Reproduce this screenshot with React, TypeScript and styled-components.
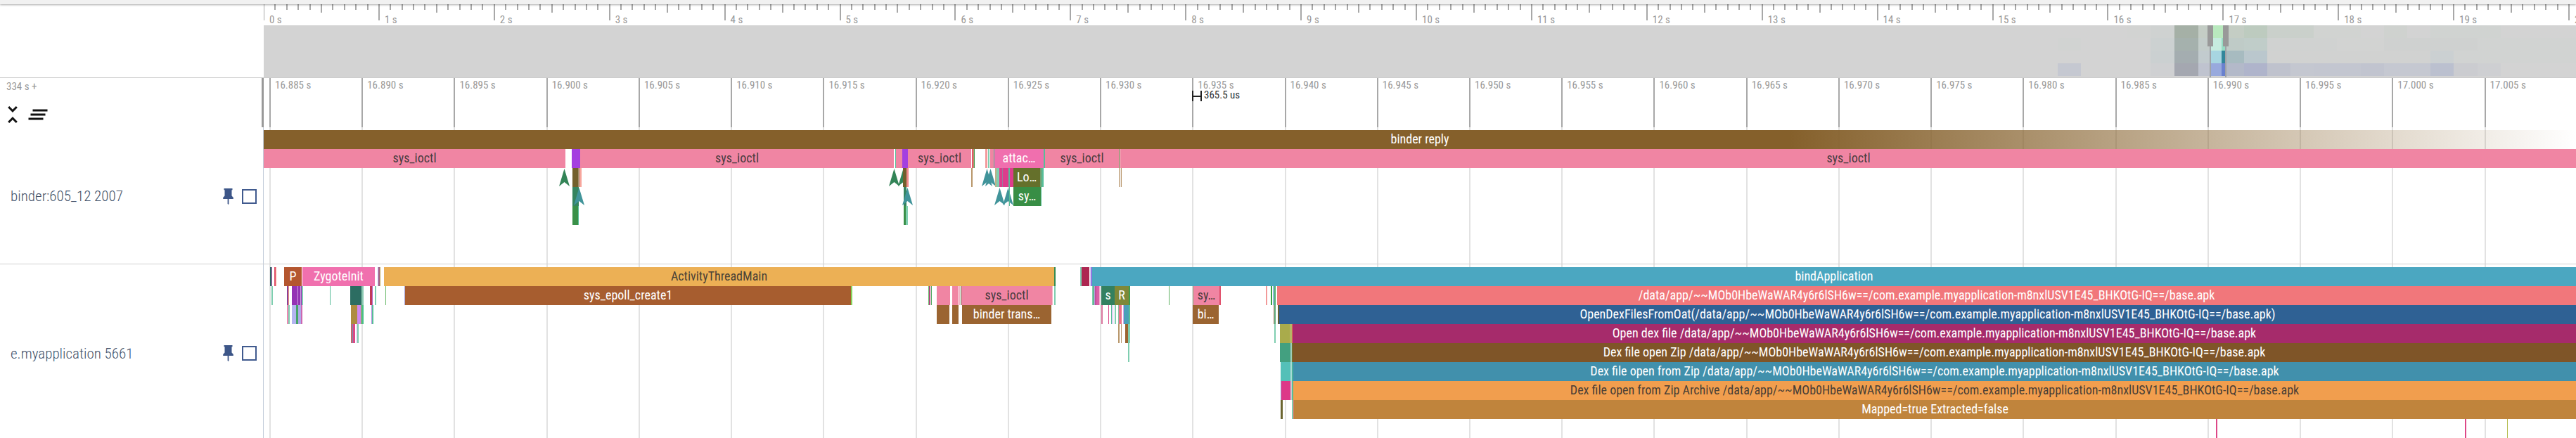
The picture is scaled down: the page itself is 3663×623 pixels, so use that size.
import React from "react";
import styled, { createGlobalStyle } from "styled-components";

/* The visible window, in the units used by all slice data below. */
const VIEW_START = 375;
const VIEW_SPAN = 3288;
const pct = (span: number) => `${(span / VIEW_SPAN) * 100}%`;
const at = (x: number) => pct(x - VIEW_START);

const GlobalStyle = createGlobalStyle`
  * { box-sizing: border-box; }
  body {
    margin: 0;
    background: #fff;
    overflow: hidden;
    font-family: "Roboto Condensed", Roboto, "Liberation Sans", sans-serif;
  }
`;

const Page = styled.div`
  height: 100vh;
  overflow: hidden;
  display: flex;
  flex-direction: column;
`;

const TopBar = styled.div`
  flex: none;
  height: 6px;
  background: #f1f1f1;
  box-shadow: 0 1px 3px rgba(0, 0, 0, 0.35);
  position: relative;
  z-index: 2;
`;

const Columns = styled.div`
  flex: none;
  display: grid;
  grid-template-columns: 375px minmax(0, 1fr);
`;

const OverviewRow = styled(Columns)`
  border-bottom: 1px solid #cccccc;
`;

const OverviewPane = styled.div`
  position: relative;
`;

const SecondsRuler = styled.div`
  position: relative;
  height: 30px;
  overflow: hidden;
`;

const Tick = styled.div<{ $height: number }>`
  position: absolute;
  top: 0;
  width: 2px;
  margin-left: -1px;
  height: ${(p) => p.$height}px;
  background: #a8a8a8;
`;

const TickLabel = styled.span<{ $gap: number; $top: number }>`
  position: absolute;
  top: ${(p) => p.$top}px;
  padding-left: ${(p) => p.$gap}px;
  font-size: 15px;
  line-height: 18px;
  color: #999999;
  white-space: nowrap;
`;

const HeatMap = styled.div`
  position: relative;
  background: #d3d3d3;
  padding-bottom: 2px;
`;

const HeatRow = styled.div`
  position: relative;
  height: 18px;
`;

const HeatCell = styled.div`
  position: absolute;
  top: 0;
  bottom: 0;
`;

const BrushLine = styled.div`
  position: absolute;
  top: 0;
  bottom: 0;
  width: 2px;
  margin-left: -1px;
  background: #a0a3a8;
`;

const BrushHandle = styled.div`
  width: 8px;
  height: 30px;
  margin-left: -3px;
  background: #999999;
`;

const RulerRow = styled(Columns)`
  height: 70px;
`;

const RulerShell = styled.div`
  display: flex;
  flex-direction: column;
  justify-content: space-between;
  border-right: 3px solid #999999;
`;

const Offset = styled.span`
  padding: 3px 9px 0;
  font-size: 15px;
  line-height: 18px;
  color: #999999;
`;

const ToolButtons = styled.div`
  display: flex;
`;

const IconButton = styled.button`
  display: block;
  padding: 0;
  border: 0;
  background: none;
  color: #121212;
  cursor: pointer;
  svg { display: block; fill: currentColor; }
`;

const PinButton = styled(IconButton)`
  color: #3d5688;
`;

const TimeRuler = styled.div`
  position: relative;
  overflow: hidden;
`;

const SpanMarker = styled.div`
  position: absolute;
  top: 15px;
  display: flex;
  align-items: flex-end;
  gap: 3px;
  font-size: 15px;
  line-height: 18px;
  color: #333333;
  white-space: nowrap;
`;

const SpanBracket = styled.div`
  width: 14px;
  height: 15px;
  display: flex;
  align-items: center;
  border: solid #222222;
  border-width: 0 2px;
  &::before {
    content: "";
    flex: 1;
    height: 2px;
    background: #222222;
  }
`;

const Tracks = styled.div`
  position: relative;
  flex: 1;
`;

const GridLayer = styled(Columns)`
  position: absolute;
  inset: 0;
`;

const GridPane = styled.div`
  position: relative;
  grid-column: 2;
`;

const GridLine = styled.div`
  position: absolute;
  top: 0;
  bottom: 0;
  width: 2px;
  margin-left: -1px;
  background: #e2e2e2;
`;

const TrackRow = styled(Columns)`
  position: relative;
  min-height: 195px;
  border-bottom: 1px solid #d0d0d0;
`;

const TrackShell = styled.div`
  display: flex;
  align-items: center;
  gap: 12px;
  padding: 2px 9px 0 15px;
  border-right: 1px solid #c3ccda;
`;

const TrackTitle = styled.label`
  flex: 1;
  font-size: 21px;
  line-height: 24px;
  font-weight: 300;
  color: #42526a;
  white-space: nowrap;
`;

const TrackCheck = styled.input`
  appearance: none;
  flex: none;
  width: 21px;
  height: 21px;
  margin: 0;
  border: 2px solid #405a8e;
  background: #fff;
`;

const TrackContent = styled.div`
  padding: 4px 0;
  overflow: hidden;
`;

const DepthRow = styled.div`
  position: relative;
  height: 27px;
`;

const SliceBox = styled.div<{ $color: string; $dark?: boolean; $fade?: boolean }>`
  position: absolute;
  top: 0;
  bottom: 0;
  overflow: hidden;
  background: ${(p) =>
    p.$fade ? `linear-gradient(to right, ${p.$color} 66%, transparent)` : p.$color};
  color: ${(p) => (p.$dark ? "rgba(50, 50, 50, 0.9)" : "#ffffff")};
  font-size: 18px;
  line-height: 26px;
  text-align: center;
  white-space: nowrap;
`;

const FlowArrow = styled.svg`
  position: absolute;
  top: 0;
  width: 15px;
  height: 27px;
  margin-left: -7px;
`;

type Item = {
  from: number;
  to?: number;
  color: string;
  text?: string;
  dark?: boolean;
  fade?: boolean;
};

const END = 3663;
const PINK = "#f085a3";
const MINT = "#7fceb0";
const TEAL = "#57bd98";
const TAN = "#b8966a";
const BROWN = "#9b6431";

const s = (from: number, to: number, color: string, text?: string, dark?: boolean): Item => ({
  from, to, color, text, dark,
});
/* A flow arrow has a tip and no extent. */
const arrow = (from: number, color: string): Item => ({ from, color });

const binderRows: Item[][] = [
  [{ from: 375, to: END, color: "#85602b", text: "binder reply", fade: true }],
  [
    s(375, 804, PINK, "sys_ioctl", true),
    s(813, 825, "#a43fe0"),
    s(825, 1271, PINK, "sys_ioctl", true),
    s(1273, 1274, TEAL),
    s(1274, 1283, PINK),
    s(1283, 1291, "#a43fe0"),
    s(1291, 1381, PINK, "sys_ioctl", true),
    s(1382, 1384, "#e05a6c"),
    s(1384, 1385, TAN),
    s(1385, 1386, "#3f9a4c"),
    s(1401, 1404, "#f39a9c"),
    s(1405, 1407, MINT),
    s(1408, 1413, PINK),
    s(1413, 1414, TEAL),
    s(1414, 1484, "#f06fae", "attac…"),
    s(1484, 1486, TEAL),
    s(1486, 1591, PINK, "sys_ioctl", true),
    s(1591, 1592, "#7da06c"),
    s(1592, 1594, "#ee9aac"),
    s(1594, END, PINK, "sys_ioctl", true),
  ],
  [
    arrow(802, "#338457"),
    s(814, 822, "#72602c"),
    s(822, 824, "#a08c6a"),
    s(824, 827, "#f7a59c"),
    arrow(1271, "#338457"),
    arrow(1284, "#338457"),
    s(1284, 1289, "#72602c"),
    s(1289, 1292, "#f08a8a"),
    s(1381, 1383, TAN),
    arrow(1403, "#41949a"),
    arrow(1408, "#41949a"),
    s(1415, 1417, "#c0b088"),
    s(1417, 1421, MINT),
    s(1421, 1441, "#dd3c8c"),
    s(1425, 1426, "#9c7a9c"),
    s(1434, 1436, TEAL),
    s(1441, 1479, "#65702b", "Lo…"),
    s(1479, 1481, "#74a070"),
    s(1481, 1484, TEAL),
    s(1591, 1592, TAN),
    s(1592, 1594, "#f0eae4"),
    s(1594, 1595, TAN),
  ],
  [
    s(814, 823, "#35845f"),
    arrow(823, "#41949a"),
    s(1285, 1289, "#35845f"),
    arrow(1290, "#41949a"),
    arrow(1421, "#41949a"),
    arrow(1433, "#41949a"),
    s(1435, 1436, TEAL),
    s(1441, 1480, "#388e45", "sy…"),
    s(1480, 1481, TEAL),
  ],
  [
    s(814, 822, "#3a9048"),
    s(822, 823, TEAL),
    s(1285, 1288, "#3a9048"),
    s(1288, 1291, MINT),
  ],
];

const APK = "/data/app/~~MOb0HbeWaWAR4y6r6lSH6w==/com.example.myapplication-m8nxlUSV1E45_BHKOtG-IQ==/base.apk";

const appRows: Item[][] = [
  [
    s(384, 386, "#2f6b60"),
    s(386, 387, "#b060b8"),
    s(390, 392, "#e0506c"),
    s(392, 393, "#f2a58c"),
    s(404, 429, "#b4562f", "P"),
    s(430, 533, "#f070ae", "ZygoteInit"),
    s(537, 538, "#b8b0f4"),
    s(538, 540, "#a06084"),
    s(540, 541, "#bda860"),
    s(546, 1499, "#ecb055", "ActivityThreadMain", true),
    s(1499, 1501, "#358a50"),
    s(1536, 1538, MINT),
    s(1538, 1549, "#ad2751"),
    s(1550, 1551, "#dcd0f4"),
    s(1551, 1553, "#8f78e0"),
    s(1553, END, "#4ba7c1", "bindApplication"),
  ],
  [
    s(386, 388, MINT),
    s(408, 410, "#8c3f98"),
    s(410, 411, "#f0a080"),
    s(415, 423, "#9533b5"),
    s(423, 424, "#cfa0e0"),
    s(424, 427, "#9533b5"),
    s(427, 428, "#cfa0e0"),
    s(428, 429, "#9533b5"),
    s(429, 431, MINT),
    s(469, 470, TEAL),
    s(498, 514, "#2c6d62"),
    s(514, 517, "#8cc9b2"),
    s(526, 529, "#c03a58"),
    s(529, 530, "#b060c0"),
    s(533, 535, MINT),
    s(548, 549, "#6fbc70"),
    s(575, 576, "#a8a8dc"),
    s(576, 1210, "#a75d2f", "sys_epoll_create1"),
    s(1210, 1212, "#85d45c"),
    s(1320, 1321, "#6cc070"),
    s(1321, 1323, "#b04880"),
    s(1324, 1325, "#4fa860"),
    s(1332, 1351, PINK),
    s(1354, 1363, PINK),
    s(1364, 1365, "#f0a8bc"),
    s(1366, 1367, "#5c8c50"),
    s(1367, 1496, PINK, "sys_ioctl", true),
    s(1496, 1497, "#f5b5c6"),
    s(1499, 1501, MINT),
    s(1553, 1555, MINT),
    s(1555, 1556, "#46a060"),
    s(1556, 1557, "#c0a0ec"),
    s(1557, 1559, "#c0509c"),
    s(1559, 1563, "#d860a8"),
    s(1563, 1564, "#f0b0cc"),
    s(1566, 1585, "#338060", "s"),
    s(1585, 1605, "#7f8838", "R"),
    s(1605, 1607, "#3f9c4c"),
    s(1662, 1663, "#5cb060"),
    s(1696, 1697, "#90b080"),
    s(1697, 1734, PINK, "sy…", true),
    s(1734, 1736, "#e0506c"),
    s(1800, 1802, "#f29a9a"),
    s(1807, 1809, "#38a048"),
    s(1810, 1812, "#8fb8d8"),
    s(1812, 1814, "#50b070"),
    s(1816, END, "#f1777b", APK),
  ],
  [
    s(408, 410, "#ec88b4"),
    s(410, 412, MINT),
    s(415, 421, "#b4b4f0"),
    s(421, 424, "#46a468"),
    s(424, 428, "#b0a8e8"),
    s(428, 430, "#cc68b0"),
    s(499, 508, "#ae8c40"),
    s(508, 513, "#cf88f0"),
    s(513, 514, "#c0a060"),
    s(514, 517, "#48c088"),
    s(528, 529, "#b890e0"),
    s(529, 531, TEAL),
    s(1332, 1350, BROWN),
    s(1354, 1363, BROWN),
    s(1368, 1495, BROWN, "binder trans…"),
    s(1566, 1568, "#dc78a0"),
    s(1576, 1577, "#d84888"),
    s(1580, 1581, TEAL),
    s(1582, 1583, "#c498ec"),
    s(1585, 1587, MINT),
    s(1590, 1591, "#90b8a0"),
    s(1591, 1595, "#ee7088"),
    s(1597, 1598, "#d0a8ec"),
    s(1598, 1605, "#4ba0b8"),
    s(1605, 1607, TEAL),
    s(1696, 1733, BROWN, "bi…"),
    s(1811, 1812, "#b08070"),
    s(1812, 1814, "#60b080"),
    s(1817, 1819, "#6b6030"),
    s(1819, END, "#2f6194", `OpenDexFilesFromOat(${APK})`),
  ],
  [
    s(499, 501, "#c4686c"),
    s(501, 502, "#7c88b0"),
    s(502, 505, "#dc4888"),
    s(507, 508, "#d4b4ec"),
    s(508, 510, MINT),
    s(1590, 1592, TAN),
    s(1594, 1595, TAN),
    s(1600, 1604, BROWN),
    s(1604, 1607, MINT),
    s(1812, 1814, MINT),
    s(1820, 1834, "#a9ab4b"),
    s(1834, 1837, "#b6b664"),
    s(1837, 1838, "#e07050"),
    s(1838, END, "#a62b6b", `Open dex file ${APK}`),
  ],
  [
    s(1604, 1606, MINT),
    s(1820, 1835, "#43a080"),
    s(1835, 1837, "#a0ccb8"),
    s(1837, 1838, "#6a7c34"),
    s(1838, END, "#7f5528", `Dex file open Zip ${APK}`),
  ],
  [
    s(1821, 1835, "#54c0b8"),
    s(1835, 1837, "#a8dcd4"),
    s(1837, 1839, "#4cb09c"),
    s(1839, END, "#4190ac", `Dex file open from Zip ${APK}`),
  ],
  [
    s(1821, 1822, "#a090d0"),
    s(1822, 1835, "#dd3888"),
    s(1835, 1837, "#c8ccd0"),
    s(1837, 1839, TEAL),
    s(1839, END, "#f19e4e", `Dex file open from Zip Archive ${APK}`, true),
  ],
  [
    s(1821, 1824, "#6b6530"),
    s(1837, 1839, MINT),
    s(1839, 1840, "#d87868"),
    s(1840, END, "#c0843c", "Mapped=true Extracted=false"),
  ],
  [s(3151, 3153, "#dd4888"), s(3505, 3507, "#dd4888"), s(3565, 3566, "#b4bc4c")],
];

const heat: Item[][] = [
  [
    s(3025, 3058, "#d2d3d2"), s(3058, 3092, "#cfd2d1"), s(3092, 3126, "#a5b0a6"),
    s(3126, 3147, "#c4cdc5"), s(3147, 3165, "#b9e9be"), s(3165, 3191, "#c4cdc4"),
    s(3191, 3224, "#bdcbbf"), s(3224, 3290, "#cad0cb"), s(3290, 3357, "#d1d3d1"),
    s(3390, 3423, "#cfd2cf"), s(3456, 3556, "#d0d3d1"),
  ],
  [
    s(2926, 2959, "#d1d3d2"), s(3058, 3092, "#ccd1d1"), s(3092, 3126, "#a5b1ad"),
    s(3126, 3143, "#c3cdca"), s(3143, 3159, "#c6ecdf"), s(3159, 3165, "#96dcc4"),
    s(3165, 3191, "#bfcbc7"), s(3191, 3224, "#c0cdc9"), s(3224, 3323, "#d0d2d1"),
    s(3323, 3390, "#d2d3d2"), s(3390, 3523, "#cfd1d0"), s(3523, END, "#d1d3d2"),
  ],
  [
    s(3058, 3092, "#cbd0d1"), s(3092, 3126, "#a4adb0"), s(3126, 3143, "#c2cbce"),
    s(3143, 3159, "#a7d5e1"), s(3159, 3165, "#32869b"), s(3165, 3191, "#a7bbc0"),
    s(3191, 3224, "#bac7cd"), s(3224, 3456, "#d1d2d1"), s(3456, 3489, "#cbd0d2"),
    s(3489, END, "#d1d3d2"),
  ],
  [
    s(2926, 2959, "#c5c8d1"), s(3058, 3092, "#cfd0d2"), s(3092, 3126, "#a4a7b0"),
    s(3126, 3143, "#bfc3cf"), s(3143, 3159, "#98a9dd"), s(3159, 3165, "#6a81ce"),
    s(3165, 3191, "#b3b9c9"), s(3191, 3224, "#afb4cb"), s(3224, 3257, "#bfc2cd"),
    s(3257, 3290, "#c4c7d0"), s(3290, 3357, "#c3c6d0"), s(3357, 3390, "#c1c4cf"),
    s(3390, 3456, "#c5c8d1"), s(3456, 3489, "#bbc0cf"), s(3489, 3523, "#cbccd0"),
    s(3523, 3556, "#cecfd2"),
  ],
];

const SECOND = 163.9;
const secondTicks = Array.from({ length: 201 }, (_, i) => i);
const gridTicks = Array.from({ length: 25 }, (_, i) => ({
  left: pct(9 + i * 131.23),
  label: `${(16.885 + i * 0.005).toFixed(3)} s`,
}));

const UnfoldIcon = () => (
  <svg width="36" height="36" viewBox="0 0 24 24">
    <path d="M7.41 18.59L8.83 20 12 16.83 15.17 20l1.41-1.41L12 14l-4.59 4.59zm9.18-13.18L15.17 4 12 7.17 8.83 4 7.41 5.41 12 10l4.59-4.59z" />
  </svg>
);

const ClearIcon = () => (
  <svg width="36" height="36" viewBox="0 0 24 24">
    <path d="M5 13h14v-2H5v2zm-2 4h14v-2H3v2zM7 7v2h14V7H7z" />
  </svg>
);

const PinIcon = () => (
  <svg width="15" height="23" viewBox="0 0 15 23">
    <path d="M1.5 0h12v2.2h-1V10.500l2.300 2.600V15H8.400v7l-.9 1-.9-1v-7H.2v-1.900l2.300-2.600V2.200h-1z" />
  </svg>
);

function Depth({ items }: { items: Item[] }) {
  return (
    <DepthRow>
      {items.map((item, i) =>
        item.to === undefined ? (
          <FlowArrow key={i} viewBox="0 0 15 27" fill={item.color} style={{ left: at(item.from) }}>
            <path d="M7.5 1L15 26L7.5 20L0 26z" />
          </FlowArrow>
        ) : (
          <SliceBox
            key={i}
            $color={item.color}
            $dark={item.dark}
            $fade={item.fade}
            style={{ left: at(item.from), width: pct(item.to - item.from) }}
          >
            {item.text}
          </SliceBox>
        )
      )}
    </DepthRow>
  );
}

function Track({ id, title, rows }: { id: string; title: string; rows: Item[][] }) {
  return (
    <TrackRow>
      <TrackShell>
        <TrackTitle htmlFor={id}>{title}</TrackTitle>
        <PinButton type="button" aria-label={`Pin ${title}`}>
          <PinIcon />
        </PinButton>
        <TrackCheck type="checkbox" id={id} />
      </TrackShell>
      <TrackContent>
        {rows.map((items, i) => (
          <Depth key={i} items={items} />
        ))}
      </TrackContent>
    </TrackRow>
  );
}

export default function App() {
  return (
    <Page>
      <GlobalStyle />
      <TopBar />
      <OverviewRow>
        <div />
        <OverviewPane>
          <SecondsRuler>
            {secondTicks.map((i) => {
              const height = i % 10 === 0 ? 23 : i % 5 === 0 ? 12 : 8;
              return <Tick key={i} $height={height} style={{ left: pct((i / 10) * SECOND) }} />;
            })}
            {secondTicks
              .filter((i) => i % 10 === 0)
              .map((i) => (
                <TickLabel key={i} $gap={8} $top={13} style={{ left: pct((i / 10) * SECOND) }}>
                  {`${i / 10} s`}
                </TickLabel>
              ))}
          </SecondsRuler>
          <HeatMap>
            {heat.map((cells, i) => (
              <HeatRow key={i}>
                {cells.map((c) => (
                  <HeatCell
                    key={c.from}
                    style={{
                      left: at(c.from),
                      width: pct((c.to ?? c.from) - c.from),
                      background: c.color,
                    }}
                  />
                ))}
              </HeatRow>
            ))}
            {[3143, 3165].map((x) => (
              <BrushLine key={x} style={{ left: at(x) }}>
                <BrushHandle />
              </BrushLine>
            ))}
          </HeatMap>
        </OverviewPane>
      </OverviewRow>
      <RulerRow>
        <RulerShell>
          <Offset>334 s +</Offset>
          <ToolButtons>
            <IconButton type="button" aria-label="Collapse all">
              <UnfoldIcon />
            </IconButton>
            <IconButton type="button" aria-label="Clear all pinned tracks">
              <ClearIcon />
            </IconButton>
          </ToolButtons>
        </RulerShell>
        <TimeRuler>
          {gridTicks.map((t) => (
            <React.Fragment key={t.label}>
              <Tick $height={70} style={{ left: t.left }} />
              <TickLabel $gap={7} $top={1} style={{ left: t.left }}>
                {t.label}
              </TickLabel>
            </React.Fragment>
          ))}
          <SpanMarker style={{ left: at(1695) }}>
            <SpanBracket />
            365.5 us
          </SpanMarker>
        </TimeRuler>
      </RulerRow>
      <Tracks>
        <GridLayer>
          <GridPane>
            {gridTicks.map((t) => (
              <GridLine key={t.label} style={{ left: t.left }} />
            ))}
          </GridPane>
        </GridLayer>
        <Track id="track-binder" title="binder:605_12 2007" rows={binderRows} />
        <Track id="track-app" title="e.myapplication 5661" rows={appRows} />
      </Tracks>
    </Page>
  );
}
